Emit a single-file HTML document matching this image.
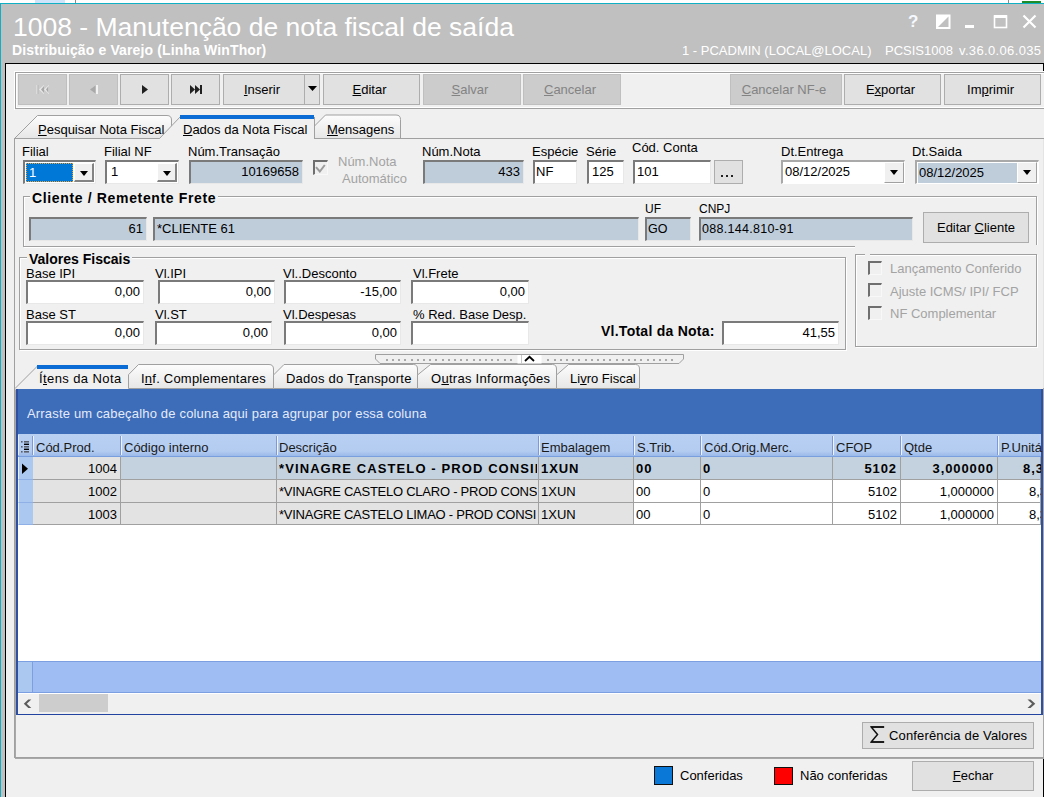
<!DOCTYPE html>
<html><head><meta charset="utf-8">
<style>
*{box-sizing:border-box;margin:0;padding:0}
html,body{width:1044px;height:797px;overflow:hidden;background:#fff}
body{position:relative;font-family:"Liberation Sans",sans-serif;font-size:13px;color:#000}
.a{position:absolute}
.t{position:absolute;white-space:nowrap;line-height:15px}
.b{font-weight:bold}
.fld{position:absolute;background:#fff;border-style:solid;border-width:2px 1px 1px 2px;border-color:#7a7a7a #e8e8e8 #e8e8e8 #7a7a7a;overflow:hidden;white-space:nowrap;line-height:20px;padding:0 3px}
.ro{background:#bfcddb}
.r{text-align:right}
.btn{position:absolute;background:#e1e1e1;border:1px solid #adadad;text-align:center;white-space:nowrap}
.dis{background:#cccccc;border-color:#bfbfbf;color:#838383}
.u{text-decoration:underline}
.cbb{background:#f0f0f0;border-style:solid;border-width:1px 2px 2px 1px;border-color:#fff #838383 #838383 #fff}
.cbb::after{content:"";position:absolute;left:5px;top:7px;border-left:4px solid transparent;border-right:4px solid transparent;border-top:5px solid #000}
.etch{position:absolute;border:1px solid #a0a0a0;box-shadow:1px 1px 0 #fff, inset 1px 1px 0 #fff}
</style></head><body>
<!-- top strip -->
<div class="a" style="left:35px;top:0;width:30px;height:3px;background:#cde4fa"></div>
<div class="a" style="left:75px;top:0;width:1px;height:3px;background:#8a8a8a"></div>
<div class="a" style="left:1008px;top:0;width:1px;height:3px;background:#8a8a8a"></div>
<div class="a" style="left:1022px;top:1px;width:19px;height:2px;background:#1f8c2a"></div>
<!-- window -->
<div class="a" style="left:0;top:3px;width:1044px;height:794px;background:#c0c0c0;border-top:1px solid #10b0c4;border-left:1px solid #10b0c4"></div>
<div class="t" style="left:13px;top:12px;font-size:26.5px;line-height:30px;color:#fff">1008 - Manutenção de nota fiscal de saída</div>
<div class="t b" style="left:12px;top:43px;font-size:14px;color:#fff;letter-spacing:0.13px">Distribuição e Varejo (Linha WinThor)</div>
<div class="t" style="left:682px;top:43px;color:#fff">1 - PCADMIN (LOCAL@LOCAL)</div><div class="t" style="left:885px;top:43px;color:#fff">PCSIS1008</div><div class="t" style="left:959px;top:43px;color:#fff;letter-spacing:0.35px">v.36.0.06.035</div>

<!-- content panel -->
<div class="a" style="left:5px;top:63px;width:1039px;height:734px;background:#f0f0f0;border-top:1px solid #000;border-left:1px solid #000"></div>


<!-- title icons -->
<div class="t b" style="left:908px;top:13px;font-size:17px;line-height:17px;color:#f6f9ff">?</div>
<svg class="a" style="left:936px;top:14px" width="15" height="15" viewBox="0 0 15 15"><rect x="1" y="1.5" width="12.5" height="12.5" fill="none" stroke="#fff" stroke-width="2"/><path d="M1 14 L13.5 1.5 L1 1.5 Z" fill="#fff"/></svg>
<div class="a" style="left:965px;top:25px;width:9px;height:3px;background:#fff"></div>
<svg class="a" style="left:993px;top:14px" width="15" height="15" viewBox="0 0 15 15"><rect x="1.5" y="2" width="12" height="11.5" fill="none" stroke="#fff" stroke-width="1.6"/><rect x="1" y="1" width="13" height="3" fill="#fff"/></svg>
<svg class="a" style="left:1022px;top:14px" width="15" height="15" viewBox="0 0 15 15"><path d="M1.5 1.5 L13.5 13.5 M13.5 1.5 L1.5 13.5" stroke="#fff" stroke-width="2.2"/></svg>

<!-- toolbar frame -->
<div class="a" style="left:1043px;top:63px;width:1px;height:8px;background:#000"></div>
<div class="a" style="left:14px;top:71px;width:1030px;height:39px;border-top:1px solid #fff;border-left:1px solid #fff"></div>
<div class="a" style="left:15px;top:72px;width:1029px;height:37px;border-top:1px solid #a0a0a0;border-left:1px solid #a0a0a0;border-bottom:1px solid #a0a0a0"></div>
<div class="a" style="left:16px;top:73px;width:1028px;height:35px;border-top:1px solid #fff;border-left:1px solid #fff;border-bottom:1px solid #fff"></div>
<div class="btn dis" style="left:18px;top:74px;width:49px;height:31px"></div>
<div class="btn dis" style="left:69px;top:74px;width:49px;height:31px"></div>
<div class="btn" style="left:120px;top:74px;width:49px;height:31px"></div>
<div class="btn" style="left:171px;top:74px;width:49px;height:31px"></div>
<div class="btn" style="left:223px;top:74px;width:82px;height:31px;line-height:29px;padding-right:4px"><span class="u">I</span>nserir</div>
<div class="btn" style="left:304px;top:74px;width:16px;height:31px"></div>
<div class="btn" style="left:323px;top:74px;width:97px;height:31px;line-height:29px;padding-right:4px"><span class="u">E</span>ditar</div>
<div class="btn dis" style="left:423px;top:74px;width:98px;height:31px;line-height:29px;padding-right:4px"><span class="u">S</span>alvar</div>
<div class="btn dis" style="left:523px;top:74px;width:98px;height:31px;line-height:29px;padding-right:4px"><span class="u">C</span>ancelar</div>
<div class="btn dis" style="left:730px;top:74px;width:112px;height:31px;line-height:29px;padding-right:4px"><span class="u">C</span>ancelar NF-e</div>
<div class="btn" style="left:844px;top:74px;width:97px;height:31px;line-height:29px;padding-right:4px">E<span class="u">x</span>portar</div>
<div class="btn" style="left:944px;top:74px;width:97px;height:31px;line-height:29px;padding-right:4px">Im<span class="u">p</span>rimir</div>
<!-- toolbar icons -->
<svg class="a" style="left:36px;top:84px" width="14" height="11" viewBox="0 0 14 11"><path d="M0.5 1 h2 v9 h-2z M8 1 L3 5.5 L8 10z M13 1 L8 5.5 L13 10z" fill="#eaeaea"/><path d="M1.5 1 h1 v9 h-1z M8 2 L5 5.5 L8 9z M12.5 2 L10 5.5 L12.5 9z" fill="#a8a8a8"/></svg>
<svg class="a" style="left:89px;top:84px" width="10" height="11" viewBox="0 0 10 11"><path d="M7 1 v9 h2 v-9z" fill="#f2f2f2"/><path d="M6.5 1.5 L1 5.5 L6.5 9.5z" fill="#a8a8a8"/></svg>
<svg class="a" style="left:141px;top:84px" width="8" height="11" viewBox="0 0 8 11"><path d="M1 1 L7 5.5 L1 10z" fill="#202020"/></svg>
<svg class="a" style="left:189px;top:84px" width="14" height="11" viewBox="0 0 14 11"><path d="M1 1 L6 5.5 L1 10z M6 1 L11 5.5 L6 10z M11 1 h2 v9 h-2z" fill="#202020"/></svg>
<svg class="a" style="left:308px;top:86px" width="9" height="6" viewBox="0 0 9 6"><path d="M0 0 H9 L4.5 5z" fill="#000"/></svg>

<!-- upper tab strip -->
<div class="a" style="left:14px;top:138px;width:1px;height:620px;background:#a0a0a0"></div>
<div class="a" style="left:1043px;top:138px;width:1px;height:250px;background:#e4e4e4"></div><div class="a" style="left:1043px;top:388px;width:1px;height:371px;background:#a8a8a8"></div><div class="a" style="left:15px;top:388px;width:1px;height:371px;background:#a8a8a8"></div><div class="a" style="left:1043px;top:759px;width:1px;height:38px;background:#000"></div>
<svg class="a" style="left:0;top:110px" width="1044" height="32">
 <defs><linearGradient id="tg" x1="0" y1="0" x2="0" y2="1"><stop offset="0" stop-color="#fdfdfd"/><stop offset="1" stop-color="#e6e6e6"/></linearGradient></defs>
 <path d="M14.5 28.5 L37.5 5.5 H167 Q171.5 5.5 171.5 10 V28.5 Z" fill="url(#tg)" stroke="#a0a0a0"/>
 <path d="M314.5 28.5 V16 L325.5 5 H396 Q400.5 5 400.5 9.5 V28.5 Z" fill="url(#tg)" stroke="#a0a0a0"/>
 <path d="M159.5 29.5 L159.5 28.5 L181 6 H313.5 V29.5 Z" fill="#f0f0f0" stroke="none"/>
 <path d="M159.5 28.5 L181 6 M314.5 7 V28.5" fill="none" stroke="#a0a0a0"/>
 <rect x="180" y="5" width="134" height="4" fill="#0a6cd4"/>
 <path d="M14 28.5 H159.5 M314 28.5 H1044" stroke="#a0a0a0"/>
</svg>
<div class="t" style="left:38px;top:122px"><span class="u">P</span>esquisar Nota Fiscal</div>
<div class="t" style="left:183px;top:122px"><span class="u">D</span>ados da Nota Fiscal</div>
<div class="t" style="left:327px;top:122px"><span class="u">M</span>ensagens</div>

<!-- upper page fields -->
<div class="t" style="left:22px;top:144px">Filial</div>
<div class="t" style="left:104px;top:144px">Filial NF</div>
<div class="t" style="left:188px;top:144px">Núm.Transação</div>
<div class="t" style="left:422px;top:144px">Núm.Nota</div>
<div class="t" style="left:532px;top:144px">Espécie</div>
<div class="t" style="left:586px;top:144px">Série</div>
<div class="t" style="left:632px;top:140px">Cód. Conta</div>
<div class="t" style="left:781px;top:144px">Dt.Entrega</div>
<div class="t" style="left:912px;top:144px">Dt.Saida</div>

<div class="fld" style="left:23px;top:160px;width:73px;height:24px;padding:0"><div class="a" style="left:1px;top:1px;width:47px;height:19px;background:#0078d7;outline:1px dotted #f0a030;outline-offset:-1px;color:#fff;line-height:19px;padding-left:3px">1</div></div>
<div class="fld" style="left:105px;top:160px;width:74px;height:24px;line-height:20px;padding-left:4px">1</div>
<div class="fld ro r" style="left:189px;top:160px;width:114px;height:24px;line-height:20px">10169658</div>
<div class="a" style="left:313px;top:160px;width:15px;height:15px;border-style:solid;border-width:2px 1px 1px 2px;border-color:#6f6f6f #f8f8f8 #f8f8f8 #6f6f6f;background:#f0f0f0"></div>
<svg class="a" style="left:315px;top:162px" width="11" height="11" viewBox="0 0 11 11"><path d="M1 5.2 L4.8 9.5 L9.8 3" fill="none" stroke="#9c9c9c" stroke-width="2"/></svg>
<div class="t" style="left:338px;top:154px;color:#a3a3a3">Núm.Nota</div>
<div class="t" style="left:342px;top:171px;color:#a3a3a3">Automático</div>
<div class="fld ro r" style="left:423px;top:160px;width:101px;height:24px;line-height:20px">433</div>
<div class="fld" style="left:533px;top:160px;width:44px;height:24px;line-height:20px;padding-left:1px">NF</div>
<div class="fld" style="left:587px;top:160px;width:37px;height:24px;line-height:20px;padding-left:3px">125</div>
<div class="fld" style="left:633px;top:160px;width:78px;height:24px;line-height:20px;padding-left:2px">101</div>
<div class="btn" style="left:714px;top:160px;width:29px;height:24px"></div><div class="a" style="left:721px;top:175px;width:2px;height:2px;background:#222"></div><div class="a" style="left:726px;top:175px;width:2px;height:2px;background:#222"></div><div class="a" style="left:731px;top:175px;width:2px;height:2px;background:#222"></div>
<div class="fld" style="left:781px;top:160px;width:124px;height:24px;line-height:20px;padding-left:2px;border-color:#a9a9a9 #fff #fff #a9a9a9">08/12/2025</div>
<div class="fld" style="left:915px;top:160px;width:124px;height:24px;padding:0;border-color:#a9a9a9 #fff #fff #a9a9a9"><div class="a" style="left:1px;top:1px;width:100px;height:20px;background:#bfcddb;line-height:19px;padding-left:1px">08/12/2025</div></div>

<!-- Cliente groupbox -->
<div class="a" style="left:23px;top:196px;width:1014px;height:51px;border:1px solid #a0a0a0;box-shadow:inset 1px 1px 0 #fff,1px 1px 0 #fff"></div>
<div class="t b" style="left:30px;top:191px;padding:0 2px;background:#f0f0f0;font-size:14px;letter-spacing:0.65px">Cliente / Remetente Frete</div>
<div class="fld ro r" style="left:29px;top:217px;width:118px;height:24px;line-height:20px">61</div>
<div class="fld ro" style="left:153px;top:217px;width:486px;height:24px;line-height:20px;padding-left:2px">*CLIENTE 61</div>
<div class="t" style="left:645px;top:202px;font-size:12px">UF</div>
<div class="t" style="left:699px;top:202px;font-size:12px">CNPJ</div>
<div class="fld ro" style="left:645px;top:217px;width:46px;height:24px;line-height:20px;padding-left:1px;font-size:12.5px">GO</div>
<div class="fld ro" style="left:699px;top:217px;width:214px;height:24px;line-height:20px;padding-left:1px;font-size:12.5px;letter-spacing:0.3px">088.144.810-91</div>
<div class="btn" style="left:923px;top:212px;width:106px;height:31px;line-height:29px">Editar <span class="u">C</span>liente</div>

<!-- Valores groupbox -->
<div class="a" style="left:19px;top:257px;width:827px;height:93px;border:1px solid #a0a0a0;box-shadow:inset 1px 1px 0 #fff,1px 1px 0 #fff"></div>
<div class="t b" style="left:27px;top:252px;padding:0 2px;background:#f0f0f0;font-size:14px">Valores Fiscais</div>
<div class="t" style="left:26px;top:266px">Base IPI</div>
<div class="t" style="left:155px;top:266px">Vl.IPI</div>
<div class="t" style="left:283px;top:266px">Vl..Desconto</div>
<div class="t" style="left:413px;top:266px">Vl.Frete</div>
<div class="t" style="left:26px;top:307px">Base ST</div>
<div class="t" style="left:155px;top:307px">Vl.ST</div>
<div class="t" style="left:283px;top:307px">Vl.Despesas</div>
<div class="t" style="left:413px;top:307px">% Red. Base Desp.</div>
<div class="fld r" style="left:26px;top:280px;width:118px;height:24px;line-height:20px">0,00</div>
<div class="fld r" style="left:158px;top:280px;width:117px;height:24px;line-height:20px">0,00</div>
<div class="fld r" style="left:284px;top:280px;width:117px;height:24px;line-height:20px">-15,00</div>
<div class="fld r" style="left:411px;top:280px;width:118px;height:24px;line-height:20px">0,00</div>
<div class="fld r" style="left:26px;top:321px;width:118px;height:24px;line-height:20px">0,00</div>
<div class="fld r" style="left:155px;top:321px;width:117px;height:24px;line-height:20px">0,00</div>
<div class="fld r" style="left:284px;top:321px;width:117px;height:24px;line-height:20px">0,00</div>
<div class="fld r" style="left:411px;top:321px;width:118px;height:24px;line-height:20px"></div>
<div class="t b" style="left:601px;top:324px;font-size:14px;letter-spacing:0.25px">Vl.Total da Nota:</div>
<div class="fld r" style="left:722px;top:321px;width:117px;height:24px;line-height:20px">41,55</div>

<!-- checkbox groupbox -->
<div class="a" style="left:855px;top:245px;width:185px;height:8px;background:#f0f0f0"></div>
<div class="a" style="left:855px;top:254px;width:182px;height:93px;border:1px solid #a0a0a0;box-shadow:inset 1px 1px 0 #fff,1px 1px 0 #fff"></div>
<div class="a" style="left:868px;top:261px;width:14px;height:14px;border-style:solid;border-width:2px 1px 1px 2px;border-color:#6f6f6f #f8f8f8 #f8f8f8 #6f6f6f"></div>
<div class="a" style="left:868px;top:283px;width:14px;height:14px;border-style:solid;border-width:2px 1px 1px 2px;border-color:#6f6f6f #f8f8f8 #f8f8f8 #6f6f6f"></div>
<div class="a" style="left:868px;top:306px;width:14px;height:14px;border-style:solid;border-width:2px 1px 1px 2px;border-color:#6f6f6f #f8f8f8 #f8f8f8 #6f6f6f"></div>
<div class="a" style="left:865px;top:253px;width:5px;height:4px;background:#f0f0f0"></div>
<div class="t" style="left:890px;top:261px;color:#a3a3a3">Lançamento Conferido</div>
<div class="t" style="left:890px;top:284px;color:#a3a3a3">Ajuste ICMS/ IPI/ FCP</div>
<div class="t" style="left:890px;top:306px;color:#a3a3a3">NF Complementar</div>

<!-- combo buttons -->
<div class="a cbb" style="left:74px;top:163px;width:20px;height:19px"></div>
<div class="a cbb" style="left:157px;top:163px;width:20px;height:19px"></div>
<div class="a cbb" style="left:884px;top:162px;width:20px;height:21px;border-width:1px;border-color:#fff #a0a0a0 #a0a0a0 #fff"></div>
<div class="a cbb" style="left:1017px;top:162px;width:20px;height:21px;border-width:1px;border-color:#fff #a0a0a0 #a0a0a0 #fff"></div>

<!-- page bottom line & splitter -->
<svg class="a" style="left:370px;top:350px" width="320" height="18">
 <path d="M5.5 4.5 H313.5 V9 L309 13.5 H10 L5.5 9 Z" fill="#f0f0f0" stroke="#a0a0a0"/>
 <rect x="147.5" y="5" width="24" height="8.5" fill="#fff"/>
 <path d="M151.5 5 V13.5" stroke="#c8c8c8"/>
 <path d="M155 11 L159.5 6.8 L164 11" fill="none" stroke="#000" stroke-width="1.8"/>
 <g fill="#a8a8a8"><rect x="16" y="9" width="2" height="2"/><rect x="22" y="9" width="2" height="2"/><rect x="28" y="9" width="2" height="2"/><rect x="34" y="9" width="2" height="2"/><rect x="41" y="9" width="2" height="2"/><rect x="47" y="9" width="2" height="2"/><rect x="53" y="9" width="2" height="2"/><rect x="59" y="9" width="2" height="2"/><rect x="65" y="9" width="2" height="2"/><rect x="72" y="9" width="2" height="2"/><rect x="78" y="9" width="2" height="2"/><rect x="84" y="9" width="2" height="2"/><rect x="90" y="9" width="2" height="2"/><rect x="96" y="9" width="2" height="2"/><rect x="103" y="9" width="2" height="2"/><rect x="109" y="9" width="2" height="2"/><rect x="115" y="9" width="2" height="2"/><rect x="121" y="9" width="2" height="2"/><rect x="127" y="9" width="2" height="2"/><rect x="134" y="9" width="2" height="2"/><rect x="140" y="9" width="2" height="2"/><rect x="177" y="9" width="2" height="2"/><rect x="184" y="9" width="2" height="2"/><rect x="190" y="9" width="2" height="2"/><rect x="196" y="9" width="2" height="2"/><rect x="202" y="9" width="2" height="2"/><rect x="208" y="9" width="2" height="2"/><rect x="215" y="9" width="2" height="2"/><rect x="221" y="9" width="2" height="2"/><rect x="227" y="9" width="2" height="2"/><rect x="233" y="9" width="2" height="2"/><rect x="239" y="9" width="2" height="2"/><rect x="246" y="9" width="2" height="2"/><rect x="252" y="9" width="2" height="2"/><rect x="258" y="9" width="2" height="2"/><rect x="264" y="9" width="2" height="2"/><rect x="270" y="9" width="2" height="2"/><rect x="277" y="9" width="2" height="2"/><rect x="283" y="9" width="2" height="2"/><rect x="289" y="9" width="2" height="2"/><rect x="295" y="9" width="2" height="2"/><rect x="301" y="9" width="2" height="2"/></g>
</svg>

<!-- lower tab strip -->
<svg class="a" style="left:0;top:360px" width="1044" height="32">
 <path d="M128.5 28.5 V14.7 L138.5 4.5 H269 Q273.5 4.5 273.5 9 V28.5 Z" fill="url(#tg)" stroke="#a0a0a0"/>
 <path d="M273.5 28.5 V15 L284 4.5 H413.5 Q417.5 4.5 417.5 9 V28.5 Z" fill="url(#tg)" stroke="#a0a0a0"/>
 <path d="M417.5 28.5 V15 L430.5 4.5 H552.5 Q556.5 4.5 556.5 9 V28.5 Z" fill="url(#tg)" stroke="#a0a0a0"/>
 <path d="M556.5 28.5 V15 L568.5 4.5 H635.5 Q639.5 4.5 639.5 9 V28.5 Z" fill="url(#tg)" stroke="#a0a0a0"/>
 <path d="M15 29.5 V28.5 L37 6.5 H128 V29.5 Z" fill="#f0f0f0"/>
 <path d="M15 28.5 L37.5 6" fill="none" stroke="#a0a0a0"/>
 <rect x="37" y="5" width="91" height="4" fill="#0a6cd4"/>
</svg>
<div class="t" style="left:39px;top:371px;letter-spacing:0.4px">Í<span class="u">t</span>ens da Nota</div>
<div class="t" style="left:141px;top:371px;letter-spacing:0.22px">I<span class="u">n</span>f. Complementares</div>
<div class="t" style="left:286px;top:371px;letter-spacing:0.22px">Dados do T<span class="u">r</span>ansporte</div>
<div class="t" style="left:431px;top:371px;letter-spacing:0.28px">O<span class="u">u</span>tras Informações</div>
<div class="t" style="left:570px;top:371px">Li<span class="u">v</span>ro Fiscal</div>

<!-- grid -->
<div class="a" style="left:16px;top:389px;width:1027px;height:326px;background:#fff;border-left:2px solid #2f50a0;border-right:2px solid #2f50a0;border-bottom:1px solid #2244a0"></div>
<div class="a" style="left:18px;top:389px;width:1023px;height:45px;background:#3d6cb8"></div>
<div class="t" style="left:27px;top:406px;color:#e4ebf8;letter-spacing:0.18px">Arraste um cabeçalho de coluna aqui para agrupar por essa coluna</div>
<div class="a" style="left:18px;top:434px;width:1023px;height:23px;background:linear-gradient(#b9d0f2,#b3ccf0 78%,#9bb9ea);border-bottom:1px solid #7a9fdf"></div>
<!-- grid columns -->
<div class="a" style="left:120px;top:436px;width:1px;height:19px;background:#7f98da"></div><div class="a" style="left:121px;top:436px;width:1px;height:19px;background:#eef4fd"></div>
<div class="a" style="left:276px;top:436px;width:1px;height:19px;background:#7f98da"></div><div class="a" style="left:277px;top:436px;width:1px;height:19px;background:#eef4fd"></div>
<div class="a" style="left:538px;top:436px;width:1px;height:19px;background:#7f98da"></div><div class="a" style="left:539px;top:436px;width:1px;height:19px;background:#eef4fd"></div>
<div class="a" style="left:633px;top:436px;width:1px;height:19px;background:#7f98da"></div><div class="a" style="left:634px;top:436px;width:1px;height:19px;background:#eef4fd"></div>
<div class="a" style="left:700px;top:436px;width:1px;height:19px;background:#7f98da"></div><div class="a" style="left:701px;top:436px;width:1px;height:19px;background:#eef4fd"></div>
<div class="a" style="left:832px;top:436px;width:1px;height:19px;background:#7f98da"></div><div class="a" style="left:833px;top:436px;width:1px;height:19px;background:#eef4fd"></div>
<div class="a" style="left:900px;top:436px;width:1px;height:19px;background:#7f98da"></div><div class="a" style="left:901px;top:436px;width:1px;height:19px;background:#eef4fd"></div>
<div class="a" style="left:997px;top:436px;width:1px;height:19px;background:#7f98da"></div><div class="a" style="left:998px;top:436px;width:1px;height:19px;background:#eef4fd"></div>
<div class="a" style="left:32px;top:436px;width:1px;height:19px;background:#7f98da"></div><div class="a" style="left:33px;top:436px;width:1px;height:19px;background:#eef4fd"></div>
<svg class="a" style="left:21px;top:440px" width="9" height="13" viewBox="0 0 9 13"><g fill="#5a5f6a"><rect x="0" y="1" width="1.6" height="1.6"/><rect x="3" y="1" width="5" height="1.6"/><rect x="0" y="6" width="1.6" height="1.6"/><rect x="3" y="6" width="5" height="1.6"/><rect x="0" y="11" width="1.6" height="1.6"/><rect x="3" y="11" width="5" height="1.6"/></g><g fill="#000"><rect x="3" y="3.6" width="5" height="1.4"/><rect x="3" y="8.6" width="5" height="1.4"/></g></svg><div class="a" style="left:18px;top:435px;width:1px;height:20px;background:#e6eefc"></div>
<div class="t" style="left:36px;top:440px;color:#1a1a1a">Cód.Prod.</div>
<div class="t" style="left:124px;top:440px;color:#1a1a1a">Código interno</div>
<div class="t" style="left:279px;top:440px;color:#1a1a1a">Descrição</div>
<div class="t" style="left:541px;top:440px;color:#1a1a1a">Embalagem</div>
<div class="t" style="left:637px;top:440px;color:#1a1a1a">S.Trib.</div>
<div class="t" style="left:704px;top:440px;color:#1a1a1a">Cód.Orig.Merc.</div>
<div class="t" style="left:836px;top:440px;color:#1a1a1a">CFOP</div>
<div class="t" style="left:904px;top:440px;color:#1a1a1a">Qtde</div>
<div class="t" style="left:1001px;top:440px;color:#1a1a1a">P.Unitá</div>
<div class="a" style="left:18px;top:457px;width:15px;height:23px;background:#aac8f0;border-left:1px solid #e8f0fc;border-bottom:1px solid #8eb0e6"></div>
<div class="a" style="left:33px;top:457px;width:88px;height:22px;background:#e3e3e3;border-right:1px solid #a0a0a0"></div>
<div class="a" style="left:121px;top:457px;width:156px;height:22px;background:#c4d2df;border-right:1px solid #a0a0a0"></div>
<div class="a" style="left:277px;top:457px;width:262px;height:22px;background:#c4d2df;border-right:1px solid #a0a0a0"></div>
<div class="a" style="left:539px;top:457px;width:95px;height:22px;background:#c4d2df;border-right:1px solid #a0a0a0"></div>
<div class="a" style="left:634px;top:457px;width:67px;height:22px;background:#c4d2df;border-right:1px solid #a0a0a0"></div>
<div class="a" style="left:701px;top:457px;width:132px;height:22px;background:#c4d2df;border-right:1px solid #a0a0a0"></div>
<div class="a" style="left:833px;top:457px;width:68px;height:22px;background:#c4d2df;border-right:1px solid #a0a0a0"></div>
<div class="a" style="left:901px;top:457px;width:97px;height:22px;background:#c4d2df;border-right:1px solid #a0a0a0"></div>
<div class="a" style="left:998px;top:457px;width:43px;height:22px;background:#c4d2df;border-right:1px solid #a0a0a0"></div>
<div class="a" style="left:33px;top:479px;width:1008px;height:1px;background:#a0a0a0"></div>
<div class="t" style="left:33px;width:84px;top:461px;text-align:right;overflow:hidden;">1004</div>
<div class="t" style="left:279px;width:258px;top:461px;overflow:hidden;font-weight:bold;letter-spacing:1.1px;">*VINAGRE CASTELO - PROD CONSINCO</div>
<div class="t" style="left:541px;width:91px;top:461px;overflow:hidden;font-weight:bold;letter-spacing:0.9px;">1XUN</div>
<div class="t" style="left:636px;width:63px;top:461px;overflow:hidden;font-weight:bold;letter-spacing:0.9px;">00</div>
<div class="t" style="left:703px;width:128px;top:461px;overflow:hidden;font-weight:bold;letter-spacing:0.9px;">0</div>
<div class="t" style="left:832px;width:65px;top:461px;text-align:right;overflow:hidden;font-weight:bold;letter-spacing:0.9px;">5102</div>
<div class="t" style="left:900px;width:94px;top:461px;text-align:right;overflow:hidden;font-weight:bold;letter-spacing:0.9px;">3,000000</div>
<div class="t" style="left:1023px;width:18px;top:461px;overflow:hidden;font-weight:bold;letter-spacing:0.9px;">8,333</div>
<div class="a" style="left:18px;top:480px;width:15px;height:23px;background:#aac8f0;border-left:1px solid #e8f0fc;border-bottom:1px solid #8eb0e6"></div>
<div class="a" style="left:33px;top:480px;width:88px;height:22px;background:#e3e3e3;border-right:1px solid #a0a0a0"></div>
<div class="a" style="left:121px;top:480px;width:156px;height:22px;background:#e3e3e3;border-right:1px solid #a0a0a0"></div>
<div class="a" style="left:277px;top:480px;width:262px;height:22px;background:#e3e3e3;border-right:1px solid #a0a0a0"></div>
<div class="a" style="left:539px;top:480px;width:95px;height:22px;background:#e3e3e3;border-right:1px solid #a0a0a0"></div>
<div class="a" style="left:634px;top:480px;width:67px;height:22px;background:#ffffff;border-right:1px solid #a0a0a0"></div>
<div class="a" style="left:701px;top:480px;width:132px;height:22px;background:#ffffff;border-right:1px solid #a0a0a0"></div>
<div class="a" style="left:833px;top:480px;width:68px;height:22px;background:#ffffff;border-right:1px solid #a0a0a0"></div>
<div class="a" style="left:901px;top:480px;width:97px;height:22px;background:#ffffff;border-right:1px solid #a0a0a0"></div>
<div class="a" style="left:998px;top:480px;width:43px;height:22px;background:#ffffff;border-right:1px solid #a0a0a0"></div>
<div class="a" style="left:33px;top:502px;width:1008px;height:1px;background:#a0a0a0"></div>
<div class="t" style="left:33px;width:84px;top:484px;text-align:right;overflow:hidden;">1002</div>
<div class="t" style="left:279px;width:258px;top:484px;overflow:hidden;letter-spacing:-0.25px">*VINAGRE CASTELO CLARO - PROD CONSI</div>
<div class="t" style="left:541px;width:91px;top:484px;overflow:hidden;">1XUN</div>
<div class="t" style="left:636px;width:63px;top:484px;overflow:hidden;">00</div>
<div class="t" style="left:703px;width:128px;top:484px;overflow:hidden;">0</div>
<div class="t" style="left:832px;width:65px;top:484px;text-align:right;overflow:hidden;">5102</div>
<div class="t" style="left:900px;width:94px;top:484px;text-align:right;overflow:hidden;">1,000000</div>
<div class="t" style="left:1029px;width:12px;top:484px;overflow:hidden;">8,333</div>
<div class="a" style="left:18px;top:503px;width:15px;height:22px;background:#aac8f0;border-left:1px solid #e8f0fc;border-bottom:1px solid #8eb0e6"></div>
<div class="a" style="left:33px;top:503px;width:88px;height:21px;background:#e3e3e3;border-right:1px solid #a0a0a0"></div>
<div class="a" style="left:121px;top:503px;width:156px;height:21px;background:#e3e3e3;border-right:1px solid #a0a0a0"></div>
<div class="a" style="left:277px;top:503px;width:262px;height:21px;background:#e3e3e3;border-right:1px solid #a0a0a0"></div>
<div class="a" style="left:539px;top:503px;width:95px;height:21px;background:#e3e3e3;border-right:1px solid #a0a0a0"></div>
<div class="a" style="left:634px;top:503px;width:67px;height:21px;background:#ffffff;border-right:1px solid #a0a0a0"></div>
<div class="a" style="left:701px;top:503px;width:132px;height:21px;background:#ffffff;border-right:1px solid #a0a0a0"></div>
<div class="a" style="left:833px;top:503px;width:68px;height:21px;background:#ffffff;border-right:1px solid #a0a0a0"></div>
<div class="a" style="left:901px;top:503px;width:97px;height:21px;background:#ffffff;border-right:1px solid #a0a0a0"></div>
<div class="a" style="left:998px;top:503px;width:43px;height:21px;background:#ffffff;border-right:1px solid #a0a0a0"></div>
<div class="a" style="left:33px;top:524px;width:1008px;height:1px;background:#a0a0a0"></div>
<div class="t" style="left:33px;width:84px;top:507px;text-align:right;overflow:hidden;">1003</div>
<div class="t" style="left:279px;width:258px;top:507px;overflow:hidden;letter-spacing:-0.25px">*VINAGRE CASTELO LIMAO - PROD CONSI</div>
<div class="t" style="left:541px;width:91px;top:507px;overflow:hidden;">1XUN</div>
<div class="t" style="left:636px;width:63px;top:507px;overflow:hidden;">00</div>
<div class="t" style="left:703px;width:128px;top:507px;overflow:hidden;">0</div>
<div class="t" style="left:832px;width:65px;top:507px;text-align:right;overflow:hidden;">5102</div>
<div class="t" style="left:900px;width:94px;top:507px;text-align:right;overflow:hidden;">1,000000</div>
<div class="t" style="left:1029px;width:12px;top:507px;overflow:hidden;">8,333</div>
<svg class="a" style="left:21px;top:463px" width="8" height="12" viewBox="0 0 8 12"><path d="M1 0.5 L7 5.7 L1 11z" fill="#000"/></svg>
<div class="a" style="left:18px;top:661px;width:1023px;height:32px;background:#9fbdf2;border-top:1px solid #7b9fe0;border-bottom:1px solid #7b9fe0"></div>
<div class="a" style="left:18px;top:662px;width:15px;height:30px;background:#abc9f0;border-right:1px solid #7b9fe0"></div>
<div class="a" style="left:18px;top:693px;width:1023px;height:21px;background:#f0f0f0;border-top:1px solid #fff"></div>
<div class="a" style="left:39px;top:694px;width:69px;height:18px;background:#cdcdcd"></div>
<svg class="a" style="left:23px;top:699px" width="10" height="10" viewBox="0 0 10 10"><path d="M8.3 0.5 H5.3 L0.8 4.7 L5.3 8.9 H8.3 L3.8 4.7 Z" fill="#5c5c5c"/></svg>
<svg class="a" style="left:1027px;top:699px" width="10" height="10" viewBox="0 0 10 10"><path d="M0.5 0.5 H3.5 L8.3 4.7 L3.5 8.9 H0.5 L5 4.7 Z" fill="#5c5c5c"/></svg>
<!-- bottom -->
<div class="a" style="left:15px;top:757px;width:1029px;height:1px;background:#a0a0a0"></div>
<div class="a" style="left:15px;top:758px;width:1029px;height:1px;background:#a8a8a8"></div>
<div class="btn" style="left:862px;top:722px;width:172px;height:27px;line-height:25px;text-align:left;padding-left:26px;letter-spacing:0.15px">Conferência de Valores</div>
<svg class="a" style="left:870px;top:726px" width="15" height="17" viewBox="0 0 15 17"><path d="M14 1 H1.2 L7.5 8.5 L1.2 16 H14" fill="none" stroke="#111" stroke-width="1.5"/><path d="M1 0.3 H14.2 V1.8 H1z M1 15.2 H14.2 V16.7 H1z" fill="#111"/></svg>
<div class="btn" style="left:912px;top:761px;width:122px;height:30px;line-height:28px"><span class="u">F</span>echar</div>
<div class="a" style="left:654px;top:766px;width:19px;height:19px;background:#0a78d7;border:1px solid #101010"></div>
<div class="t" style="left:680px;top:768px">Conferidas</div>
<div class="a" style="left:774px;top:767px;width:19px;height:18px;background:#ff0000;border:1px solid #101010"></div>
<div class="t" style="left:800px;top:768px">Não conferidas</div>
</body></html>
